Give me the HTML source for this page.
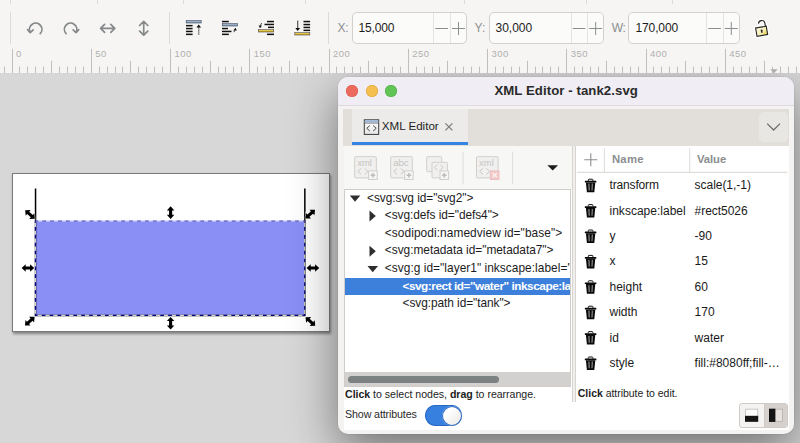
<!DOCTYPE html>
<html><head><meta charset="utf-8"><title>XML Editor - tank2.svg</title>
<style>
html,body{margin:0;padding:0}
body{width:800px;height:443px;overflow:hidden;position:relative;background:#f6f5f4;font-family:"Liberation Sans",sans-serif;font-size:12px;color:#1a1a1a}
.abs,.abs *{position:absolute}
div,span,svg{position:absolute;white-space:nowrap}
.t{line-height:1;transform-origin:0 50%}
#toolbar{left:0;top:0;width:800px;height:48px;background:#f6f5f4}
.vsep{width:1px;background:#dcdad7}
.spin{height:32.4px;top:12px;border:1px solid #d3cfcb;border-radius:5px;background:#fbfbfa;box-sizing:border-box}
.spin i{position:absolute;top:0;bottom:0;width:1px;background:#e6e3e0}
.lab{color:#8c8f90;font-size:12px}
#ruler{left:0;top:48px;width:800px;height:25px;background:#f6f5f4;overflow:hidden}
#canvas{left:0;top:73px;width:800px;height:370px;background:#d7d7d7;overflow:hidden}
#win{left:338px;top:76.5px;width:455.5px;height:357.5px;border-radius:10px;background:#f4f3f2;box-shadow:0 0 0 0.5px rgba(0,0,0,.08),0 17px 48px 0 rgba(0,0,0,.47);overflow:visible}
#winin{left:0;top:0;width:100%;height:100%;border-radius:10px;overflow:hidden}
</style></head><body>

<div id="toolbar">
<div class="vsep" style="left:10px;top:0;height:3.5px"></div>
<div class="vsep" style="left:96.5px;top:0;height:3.5px"></div>
<div class="vsep" style="left:182.5px;top:0;height:3.5px"></div>
<div class="vsep" style="left:305px;top:0;height:3.5px"></div>
<div class="vsep" style="left:463.5px;top:0;height:3.5px"></div>
<div class="vsep" style="left:586px;top:0;height:3.5px"></div>
<div class="vsep" style="left:671.5px;top:0;height:3.5px"></div>
<div class="vsep" style="left:10px;top:12.3px;height:32px"></div>
<div class="vsep" style="left:168.5px;top:12.3px;height:32px"></div>
<div class="vsep" style="left:327.5px;top:12.3px;height:32px"></div>
<svg style="left:0;top:0" width="340" height="48" viewBox="0 0 340 48" fill="none">
<g stroke="#858989" stroke-width="1.7" stroke-linecap="round" stroke-linejoin="round">
<path d="M30.2 32.2 A6.2 6.2 0 1 1 40.2 33.6"/><path d="M27.6 29.6 L30.2 32.6 L33.2 29.8"/>
<g transform="translate(-1.2 0)"><path d="M77.3 32.2 A6.2 6.2 0 1 0 67.3 33.6"/><path d="M79.9 29.6 L77.3 32.6 L74.3 29.8"/></g>
<path d="M100.6 28.3 H114.8 M104.6 24.3 L100.6 28.3 L104.6 32.3 M110.8 24.3 L114.8 28.3 L110.8 32.3"/>
<path d="M143.7 21.4 V35.2 M139.6 25.5 L143.7 21.4 L147.8 25.5 M139.6 31.1 L143.7 35.2 L147.8 31.1"/>
</g>
<defs><linearGradient id="bl" x1="0" y1="0" x2="0" y2="1"><stop offset="0" stop-color="#b4c0d2"/><stop offset="1" stop-color="#7d8fab"/></linearGradient><linearGradient id="yl" x1="0" y1="0" x2="0" y2="1"><stop offset="0" stop-color="#f3dc7a"/><stop offset="1" stop-color="#c9a000"/></linearGradient></defs>
<rect x="186.2" y="20.6" width="15" height="2.4" fill="url(#bl)" stroke="#3b4a63" stroke-width=".6"/>
<rect x="186" y="24.900000000000002" width="6.6" height="1.5" fill="#111"/>
<rect x="186" y="27.8" width="6.6" height="1.5" fill="#111"/>
<rect x="186" y="30.7" width="6.6" height="1.5" fill="#111"/>
<rect x="186" y="33.599999999999994" width="6.6" height="1.5" fill="#111"/>
<rect x="198.1" y="27" width="1.3" height="8" fill="#8a8a8a"/><path d="M196.4 27.6 L198.75 24.6 L201.1 27.6 Z" fill="#111"/>
<rect x="222" y="20.8" width="6.8" height="1.5" fill="#111"/>
<rect x="222.3" y="23.6" width="15.2" height="2.4" fill="url(#bl)" stroke="#3b4a63" stroke-width=".6"/>
<rect x="222" y="27.8" width="6" height="1.5" fill="#111"/><rect x="222" y="30.7" width="9.5" height="1.5" fill="#111"/><rect x="222" y="33.6" width="6.8" height="1.5" fill="#111"/>
<path d="M233.2 30.6 L235.6 27.8 L236.8 30.6 Z" fill="#111"/><path d="M235 30 L233.8 32.2" stroke="#444" stroke-width="1"/>
<rect x="267" y="20.8" width="7" height="1.5" fill="#111"/><rect x="264.5" y="23.7" width="9.5" height="1.5" fill="#111"/><rect x="268" y="26.6" width="6" height="1.5" fill="#111"/>
<rect x="258.5" y="29.6" width="15.2" height="2.4" fill="url(#yl)" stroke="#4a4a5a" stroke-width=".6"/>
<rect x="267" y="33.6" width="7" height="1.5" fill="#111"/>
<path d="M258.6 25.4 L262 25.4 L260 28.2 Z" fill="#111"/><path d="M261.6 23 L260.4 25.6" stroke="#444" stroke-width="1"/>
<rect x="297.1" y="20.6" width="1.2" height="8" fill="#555"/><path d="M295.3 28 L300.1 28 L297.7 31 Z" fill="#111"/>
<rect x="303.5" y="20.8" width="6.6" height="1.5" fill="#111"/>
<rect x="303.5" y="23.8" width="6.6" height="1.5" fill="#111"/>
<rect x="303.5" y="26.7" width="6.6" height="1.5" fill="#111"/>
<rect x="303.5" y="29.6" width="6.6" height="1.5" fill="#111"/>
<rect x="294.8" y="32.6" width="15" height="2.4" fill="url(#yl)" stroke="#4a4a5a" stroke-width=".6"/>
</svg>
<span class="t lab" id="lX" style="letter-spacing:-0.122px;left:337.4px;top:22px">X:</span>
<div class="spin" style="left:351.5px;width:115.5px"><i style="left:80.89999999999998px"></i><i style="left:97.5px"></i></div>
<span class="t" id="vX" style="letter-spacing:-0.117px;left:358.4px;top:21.9px;font-size:12px;color:#1c1c1c">15,000</span>
<svg style="left:0;top:0" width="800" height="48"><g stroke="#8b8e8f" stroke-width="1"><path d="M435.4 28.5 H448.0"/><path d="M452.0 28.5 H465.0 M458.5 22 V35"/></g></svg>
<span class="t lab" id="lY" style="letter-spacing:0.206px;left:474.5px;top:22px">Y:</span>
<div class="spin" style="left:488.6px;width:115.3px"><i style="left:81.19999999999993px"></i><i style="left:97.79999999999995px"></i></div>
<span class="t" id="vY" style="letter-spacing:-0.017px;left:495.5px;top:21.9px;font-size:12px;color:#1c1c1c">30,000</span>
<svg style="left:0;top:0" width="800" height="48"><g stroke="#8b8e8f" stroke-width="1"><path d="M572.8 28.5 H585.3999999999999"/><path d="M589.15 28.5 H602.15 M595.65 22 V35"/></g></svg>
<span class="t lab" id="lW" style="letter-spacing:-0.300px;left:611.7px;top:22px">W:</span>
<div class="spin" style="left:628.2px;width:111.4px"><i style="left:77.0px"></i><i style="left:93.79999999999995px"></i></div>
<span class="t" id="vW" style="letter-spacing:-0.127px;left:635.5px;top:21.9px;font-size:12px;color:#1c1c1c">170,000</span>
<svg style="left:0;top:0" width="800" height="48"><g stroke="#8b8e8f" stroke-width="1"><path d="M708.3000000000001 28.5 H720.9"/><path d="M724.8000000000001 28.5 H737.8000000000001 M731.3000000000001 22 V35"/></g></svg>
<svg style="left:750px;top:14px" width="26" height="28" viewBox="750 14 26 28"><g transform="rotate(-10 762 31)"><path d="M766.2 27 V23.7 A3.25 3.25 0 0 0 759.8 23.1" fill="none" stroke="#fff" stroke-width="3.2"/><rect x="755.6" y="26.4" width="12" height="9.6" fill="#fff" stroke="#fff" stroke-width="2.4"/><path d="M766.2 27 V23.7 A3.25 3.25 0 0 0 759.8 23.1" fill="none" stroke="#222" stroke-width="1.1"/><defs><linearGradient id="lk" x1="0" y1="0" x2="1" y2="1"><stop offset="0" stop-color="#fdfbe6"/><stop offset=".6" stop-color="#f5eeb0"/><stop offset="1" stop-color="#e6c030"/></linearGradient></defs><rect x="756.2" y="27" width="10.8" height="8.4" fill="url(#lk)" stroke="#222" stroke-width="1.1"/><path d="M761.6 29.4 a1 1 0 0 1 1 1 l-.3 2.4 h-1.2 l-.3 -2.4 a1 1 0 0 1 .8 -1z" fill="#222"/></g></svg>
</div>
<div id="ruler"><svg style="left:0;top:0" width="800" height="26" viewBox="0 48 800 26">
<g stroke="#bfbfbd" stroke-width="1">
<path d="M4.5 66.6 V73"/>
<path d="M12.5 48.8 V73"/>
<path d="M19.5 66.6 V73"/>
<path d="M27.5 66.6 V73"/>
<path d="M35.5 66.6 V73"/>
<path d="M43.5 66.6 V73"/>
<path d="M51.5 60.8 V73"/>
<path d="M59.5 66.6 V73"/>
<path d="M67.5 66.6 V73"/>
<path d="M75.5 66.6 V73"/>
<path d="M83.5 66.6 V73"/>
<path d="M91.5 48.8 V73"/>
<path d="M99.5 66.6 V73"/>
<path d="M107.5 66.6 V73"/>
<path d="M115.5 66.6 V73"/>
<path d="M122.5 66.6 V73"/>
<path d="M130.5 60.8 V73"/>
<path d="M138.5 66.6 V73"/>
<path d="M146.5 66.6 V73"/>
<path d="M154.5 66.6 V73"/>
<path d="M162.5 66.6 V73"/>
<path d="M170.5 48.8 V73"/>
<path d="M178.5 66.6 V73"/>
<path d="M186.5 66.6 V73"/>
<path d="M194.5 66.6 V73"/>
<path d="M202.5 66.6 V73"/>
<path d="M210.5 60.8 V73"/>
<path d="M218.5 66.6 V73"/>
<path d="M225.5 66.6 V73"/>
<path d="M233.5 66.6 V73"/>
<path d="M241.5 66.6 V73"/>
<path d="M249.5 48.8 V73"/>
<path d="M257.5 66.6 V73"/>
<path d="M265.5 66.6 V73"/>
<path d="M273.5 66.6 V73"/>
<path d="M281.5 66.6 V73"/>
<path d="M289.5 60.8 V73"/>
<path d="M297.5 66.6 V73"/>
<path d="M305.5 66.6 V73"/>
<path d="M313.5 66.6 V73"/>
<path d="M321.5 66.6 V73"/>
<path d="M329.5 48.8 V73"/>
<path d="M336.5 66.6 V73"/>
<path d="M344.5 66.6 V73"/>
<path d="M352.5 66.6 V73"/>
<path d="M360.5 66.6 V73"/>
<path d="M368.5 60.8 V73"/>
<path d="M376.5 66.6 V73"/>
<path d="M384.5 66.6 V73"/>
<path d="M392.5 66.6 V73"/>
<path d="M400.5 66.6 V73"/>
<path d="M408.5 48.8 V73"/>
<path d="M416.5 66.6 V73"/>
<path d="M424.5 66.6 V73"/>
<path d="M432.5 66.6 V73"/>
<path d="M439.5 66.6 V73"/>
<path d="M447.5 60.8 V73"/>
<path d="M455.5 66.6 V73"/>
<path d="M463.5 66.6 V73"/>
<path d="M471.5 66.6 V73"/>
<path d="M479.5 66.6 V73"/>
<path d="M487.5 48.8 V73"/>
<path d="M495.5 66.6 V73"/>
<path d="M503.5 66.6 V73"/>
<path d="M511.5 66.6 V73"/>
<path d="M519.5 66.6 V73"/>
<path d="M527.5 60.8 V73"/>
<path d="M535.5 66.6 V73"/>
<path d="M542.5 66.6 V73"/>
<path d="M550.5 66.6 V73"/>
<path d="M558.5 66.6 V73"/>
<path d="M566.5 48.8 V73"/>
<path d="M574.5 66.6 V73"/>
<path d="M582.5 66.6 V73"/>
<path d="M590.5 66.6 V73"/>
<path d="M598.5 66.6 V73"/>
<path d="M606.5 60.8 V73"/>
<path d="M614.5 66.6 V73"/>
<path d="M622.5 66.6 V73"/>
<path d="M630.5 66.6 V73"/>
<path d="M638.5 66.6 V73"/>
<path d="M646.5 48.8 V73"/>
<path d="M653.5 66.6 V73"/>
<path d="M661.5 66.6 V73"/>
<path d="M669.5 66.6 V73"/>
<path d="M677.5 66.6 V73"/>
<path d="M685.5 60.8 V73"/>
<path d="M693.5 66.6 V73"/>
<path d="M701.5 66.6 V73"/>
<path d="M709.5 66.6 V73"/>
<path d="M717.5 66.6 V73"/>
<path d="M725.5 48.8 V73"/>
<path d="M733.5 66.6 V73"/>
<path d="M741.5 66.6 V73"/>
<path d="M749.5 66.6 V73"/>
<path d="M756.5 66.6 V73"/>
<path d="M764.5 60.8 V73"/>
<path d="M772.5 66.6 V73"/>
<path d="M780.5 66.6 V73"/>
<path d="M788.5 66.6 V73"/>
<path d="M796.5 66.6 V73"/>
</g>
<text x="16.0" y="56.6" font-size="9.5" letter-spacing=".45" fill="#b0b0ae" font-family="Liberation Sans, sans-serif">0</text>
<text x="95.2" y="56.6" font-size="9.5" letter-spacing=".45" fill="#b0b0ae" font-family="Liberation Sans, sans-serif">50</text>
<text x="174.5" y="56.6" font-size="9.5" letter-spacing=".45" fill="#b0b0ae" font-family="Liberation Sans, sans-serif">100</text>
<text x="253.8" y="56.6" font-size="9.5" letter-spacing=".45" fill="#b0b0ae" font-family="Liberation Sans, sans-serif">150</text>
<text x="333.0" y="56.6" font-size="9.5" letter-spacing=".45" fill="#b0b0ae" font-family="Liberation Sans, sans-serif">200</text>
<text x="412.2" y="56.6" font-size="9.5" letter-spacing=".45" fill="#b0b0ae" font-family="Liberation Sans, sans-serif">250</text>
<text x="491.5" y="56.6" font-size="9.5" letter-spacing=".45" fill="#b0b0ae" font-family="Liberation Sans, sans-serif">300</text>
<text x="570.8" y="56.6" font-size="9.5" letter-spacing=".45" fill="#b0b0ae" font-family="Liberation Sans, sans-serif">350</text>
<text x="650.0" y="56.6" font-size="9.5" letter-spacing=".45" fill="#b0b0ae" font-family="Liberation Sans, sans-serif">400</text>
<text x="729.2" y="56.6" font-size="9.5" letter-spacing=".45" fill="#b0b0ae" font-family="Liberation Sans, sans-serif">450</text>
<path d="M770.3 69.2 L777.7 69.2 L774 73.3 Z" fill="#adadab"/>
</svg></div>
<div id="canvas">
<div style="left:12px;top:100px;width:318px;height:159px;background:#fff;border:1px solid #7a7a7a;box-sizing:border-box;box-shadow:0.5px 1.5px 2.5px rgba(0,0,0,.4)"></div>
<svg style="left:0;top:0" width="800" height="370" viewBox="0 73 800 370">
<rect x="35.10" y="220.60" width="269.50" height="94.90" fill="#8a8ff6"/>
<path d="M35.55 188.5 V315.50 H304.85 V188.5" fill="none" stroke="#000" stroke-width="1.5"/>
<path d="M35.40 315.40 V221.05 M35.40 315.40 H304.70 V221.05" fill="none" stroke="#d4d4cc" stroke-width="1.2"/>
<path d="M35.40 221.05 V315.40 H304.70 V221.05" fill="none" stroke="#00007a" stroke-width="1.2" stroke-dasharray="3.7 4.2" stroke-dashoffset="2"/>
<path d="M35.40 221.05 H304.70" fill="none" stroke="#f4f4ff" stroke-width=".9" stroke-opacity=".8"/>
<path d="M35.40 221.05 H304.70" fill="none" stroke="#101090" stroke-width=".9" stroke-opacity=".8" stroke-dasharray="3.7 4.2" stroke-dashoffset="1"/>
<path d="M-6.3 0 L-2.2 -3.75 L-2.2 -1.55 L2.2 -1.55 L2.2 -3.75 L6.3 0 L2.2 3.75 L2.2 1.55 L-2.2 1.55 L-2.2 3.75 Z" transform="translate(170.60 212.60) rotate(90)" fill="#000" stroke="#fff" stroke-width="1.4" stroke-opacity=".55" paint-order="stroke"/>
<path d="M-6.3 0 L-2.2 -3.75 L-2.2 -1.55 L2.2 -1.55 L2.2 -3.75 L6.3 0 L2.2 3.75 L2.2 1.55 L-2.2 1.55 L-2.2 3.75 Z" transform="translate(170.60 323.20) rotate(90)" fill="#000" stroke="#fff" stroke-width="1.4" stroke-opacity=".55" paint-order="stroke"/>
<path d="M-6.3 0 L-2.2 -3.75 L-2.2 -1.55 L2.2 -1.55 L2.2 -3.75 L6.3 0 L2.2 3.75 L2.2 1.55 L-2.2 1.55 L-2.2 3.75 Z" transform="translate(27.90 268.05) rotate(0)" fill="#000" stroke="#fff" stroke-width="1.4" stroke-opacity=".55" paint-order="stroke"/>
<path d="M-6.3 0 L-2.2 -3.75 L-2.2 -1.55 L2.2 -1.55 L2.2 -3.75 L6.3 0 L2.2 3.75 L2.2 1.55 L-2.2 1.55 L-2.2 3.75 Z" transform="translate(312.90 268.05) rotate(0)" fill="#000" stroke="#fff" stroke-width="1.4" stroke-opacity=".55" paint-order="stroke"/>
<path d="M-6.5 0 L-2.4000000000000004 -3.75 L-2.4000000000000004 -1.55 L2.4000000000000004 -1.55 L2.4000000000000004 -3.75 L6.5 0 L2.4000000000000004 3.75 L2.4000000000000004 1.55 L-2.4000000000000004 1.55 L-2.4000000000000004 3.75 Z" transform="translate(30.00 214.50) rotate(42)" fill="#000" stroke="#fff" stroke-width="1.4" stroke-opacity=".55" paint-order="stroke"/>
<path d="M-6.5 0 L-2.4000000000000004 -3.75 L-2.4000000000000004 -1.55 L2.4000000000000004 -1.55 L2.4000000000000004 -3.75 L6.5 0 L2.4000000000000004 3.75 L2.4000000000000004 1.55 L-2.4000000000000004 1.55 L-2.4000000000000004 3.75 Z" transform="translate(310.20 214.10) rotate(-42)" fill="#000" stroke="#fff" stroke-width="1.4" stroke-opacity=".55" paint-order="stroke"/>
<path d="M-6.5 0 L-2.4000000000000004 -3.75 L-2.4000000000000004 -1.55 L2.4000000000000004 -1.55 L2.4000000000000004 -3.75 L6.5 0 L2.4000000000000004 3.75 L2.4000000000000004 1.55 L-2.4000000000000004 1.55 L-2.4000000000000004 3.75 Z" transform="translate(29.80 321.20) rotate(-42)" fill="#000" stroke="#fff" stroke-width="1.4" stroke-opacity=".55" paint-order="stroke"/>
<path d="M-6.5 0 L-2.4000000000000004 -3.75 L-2.4000000000000004 -1.55 L2.4000000000000004 -1.55 L2.4000000000000004 -3.75 L6.5 0 L2.4000000000000004 3.75 L2.4000000000000004 1.55 L-2.4000000000000004 1.55 L-2.4000000000000004 3.75 Z" transform="translate(310.40 321.50) rotate(42)" fill="#000" stroke="#fff" stroke-width="1.4" stroke-opacity=".55" paint-order="stroke"/>
</svg>
<div id="win" style="top:3.8px"><div id="winin">
<div style="left:0;top:0;width:100%;height:28.4px;background:#f0edf5;border-bottom:1px solid #dedbe0"></div>
<div style="left:8.199999999999989px;top:8.200000000000003px;width:12px;height:12px;border-radius:50%;background:#ed6a5e;box-shadow:inset 0 0 0 .5px #d5554a"></div>
<div style="left:27.69999999999999px;top:8.200000000000003px;width:12px;height:12px;border-radius:50%;background:#f5bf4f;box-shadow:inset 0 0 0 .5px #d9a23c"></div>
<div style="left:47.19999999999999px;top:8.200000000000003px;width:12px;height:12px;border-radius:50%;background:#61c454;box-shadow:inset 0 0 0 .5px #4fa83f"></div>
<span class="t" id="title" style="letter-spacing:0.076px;left:156.39999999999998px;top:6.799999999999997px;font-size:13.2px;font-weight:bold;color:#2a2a2a">XML Editor - tank2.svg</span>
<div style="left:5.5px;top:69.2px;width:445.70000000000005px;height:284.2px;background:#fff"></div>
<div style="left:5.5px;top:69.2px;width:228.0px;height:42.599999999999994px;background:#f7f7f6"></div>
<div style="left:5px;top:32.5px;width:446.4px;height:36.500000000000014px;background:#e2dfdb"></div>
<div style="left:14px;top:32.5px;width:116.19999999999999px;height:36.10000000000001px;background:#ecebe9;border-bottom:3.4px solid #3584e4;box-sizing:border-box"></div>
<svg style="left:24px;top:40.2px" width="20" height="20" viewBox="362 117 20 20"><defs><linearGradient id="tg" x1="0" y1="0" x2="0" y2="1"><stop offset="0" stop-color="#ffffff"/><stop offset="1" stop-color="#e6e6e6"/></linearGradient></defs><rect x="364.3" y="119.8" width="14.4" height="14.6" fill="url(#tg)" stroke="#3a3a3a" stroke-width="1"/><rect x="364.8" y="120.3" width="13.4" height="2.4" fill="#9db7dc"/><path d="M364.3 123.2 H378.7" stroke="#666" stroke-width=".7"/><path d="M369.8 125.6 L366.8 128.3 L369.8 131 M373.2 125.6 L376.2 128.3 L373.2 131" fill="none" stroke="#444" stroke-width="1"/></svg>
<span class="t" id="tabt" style="letter-spacing:-0.002px;left:43.80000000000001px;top:43.5px;font-size:11.6px;color:#1e1e1e">XML Editor</span>
<svg style="left:105px;top:44.2px" width="12" height="12" viewBox="443 121 12 12"><path d="M445.4 123.4 L452.4 130.4 M452.4 123.4 L445.4 130.4" stroke="#7c7f80" stroke-width="1.3"/></svg>
<div style="left:421px;top:35.60000000000001px;width:29.3px;height:29.3px;border-radius:5px;background:#e9e7e4"></div>
<svg style="left:426px;top:43.2px" width="20" height="14" viewBox="764 120 20 14"><path d="M767.2 123.6 L773.6 130 L780 123.6" fill="none" stroke="#6d7071" stroke-width="1.3"/></svg>
<svg style="left:7px;top:71.2px" width="225" height="40" viewBox="345 148 225 40" font-family="Liberation Sans, sans-serif">
<rect x="354.7" y="156.7" width="21.6" height="21.2" rx="1" fill="#f1f0ef" stroke="#cfcfcd" stroke-width="1"/>
<text x="357.2" y="165.8" font-size="9.5" fill="#c4c4c2">xml</text>
<path d="M361.2 168.4 L357.8 171.4 L361.2 174.4 M364.59999999999997 168.4 L368.0 171.4 L364.59999999999997 174.4" fill="none" stroke="#c8c8c6" stroke-width="1"/>
<rect x="368.59999999999997" y="170.9" width="8.6" height="8.6" fill="#f6f5f4" stroke="#cfcfcd" stroke-width="1"/>
<path d="M370.59999999999997 175.2 H375.2 M372.9 172.9 V177.5" stroke="#bdbdbb" stroke-width="1.6"/>
<rect x="390.7" y="156.7" width="21.6" height="21.2" rx="1" fill="#f1f0ef" stroke="#cfcfcd" stroke-width="1"/>
<text x="393.2" y="165.8" font-size="9.5" fill="#c4c4c2">abc</text>
<path d="M397.2 168.4 L393.8 171.4 L397.2 174.4 M400.59999999999997 168.4 L404.0 171.4 L400.59999999999997 174.4" fill="none" stroke="#c8c8c6" stroke-width="1"/>
<rect x="404.59999999999997" y="170.9" width="8.6" height="8.6" fill="#f6f5f4" stroke="#cfcfcd" stroke-width="1"/>
<path d="M406.59999999999997 175.2 H411.2 M408.9 172.9 V177.5" stroke="#bdbdbb" stroke-width="1.6"/>
<rect x="426.7" y="156.7" width="15" height="15" rx="1" fill="#f1f0ef" stroke="#cfcfcd"/>
<rect x="432" y="162.3" width="15.4" height="15.6" rx="1" fill="#f1f0ef" stroke="#cfcfcd"/>
<path d="M437.2 164.6 L434.6 167.4 L437.2 170.2 M440.4 164.6 L443 167.4 L440.4 170.2" fill="none" stroke="#c8c8c6" stroke-width="1"/>
<rect x="440" y="170.9" width="8.6" height="8.6" fill="#f6f5f4" stroke="#cfcfcd"/><path d="M442 175.2 H446.6 M444.3 172.9 V177.5" stroke="#bdbdbb" stroke-width="1.6"/>
<rect x="476.5" y="156.7" width="21.6" height="21.2" rx="1" fill="#f1f0ef" stroke="#cfcfcd" stroke-width="1"/>
<text x="479" y="165.8" font-size="9.5" fill="#c4c4c2">xml</text>
<path d="M483 168.4 L479.6 171.4 L483 174.4 M486.4 168.4 L489.8 171.4 L486.4 174.4" fill="none" stroke="#c8c8c6" stroke-width="1"/>
<rect x="490.4" y="170.9" width="8.6" height="8.6" fill="#f1c9c9" stroke="#ecc0c0" stroke-width="1"/>
<path d="M492.6 173.1 L496.8 177.3 M496.8 173.1 L492.6 177.3" stroke="#fbeeee" stroke-width="1.6"/>
<path d="M463 151.6 V184.4 M512.6 151.6 V184.4" stroke="#dedcd9" stroke-width="1"/>
<path d="M547.4 165.2 H558 L552.7 170.6 Z" fill="#1c1c1c"/>
</svg>
<div style="left:6px;top:111.8px;width:227.20000000000005px;height:198.00000000000003px;background:#fff;border:1px solid #d0ccc8;box-sizing:border-box"></div>
<div id="tree" style="left:7px;top:112.8px;width:225.20000000000005px;height:182.4px;overflow:hidden">
<svg style="left:0;top:0" width="226" height="183" viewBox="345 189.6 226 183">
<path d="M349.79999999999995 195.1 H360.29999999999995 L355.04999999999995 201.3 Z" fill="#2e2e2e"/>
<path d="M369.5 210.12 V221.12 L375.79999999999995 215.62 Z" fill="#2e2e2e"/>
<path d="M369.5 245.36 V256.36 L375.79999999999995 250.86 Z" fill="#2e2e2e"/>
<path d="M367.49999999999994 265.58000000000004 H377.99999999999994 L372.74999999999994 271.78000000000003 Z" fill="#2e2e2e"/>
</svg>
<span class="t tr" id="tr0" style="letter-spacing:-0.056px;left:22.100000000000023px;top:3.0px;font-size:11.9px;color:#1c1c1c">&lt;svg:svg id="svg2"&gt;</span>
<span class="t tr" id="tr1" style="letter-spacing:-0.062px;left:39.80000000000001px;top:20.620000000000005px;font-size:11.9px;color:#1c1c1c">&lt;svg:defs id="defs4"&gt;</span>
<span class="t tr" id="tr2" style="letter-spacing:0.071px;left:39.80000000000001px;top:38.24000000000001px;font-size:11.9px;color:#1c1c1c">&lt;sodipodi:namedview id="base"&gt;</span>
<span class="t tr" id="tr3" style="letter-spacing:-0.025px;left:39.80000000000001px;top:55.860000000000014px;font-size:11.9px;color:#1c1c1c">&lt;svg:metadata id="metadata7"&gt;</span>
<span class="t tr" id="tr4" style="letter-spacing:0.039px;left:39.80000000000001px;top:73.48000000000005px;font-size:11.9px;color:#1c1c1c">&lt;svg:g id="layer1" inkscape:label="</span>
<div style="left:0;top:88.29999999999998px;width:300px;height:17.3px;background:#3d80db"></div>
<span class="t tr" id="tr5" style="letter-spacing:-0.465px;left:57.5px;top:91.10000000000005px;font-size:11.8px;font-weight:bold;color:#fff"><span id="tr5a" style="position:static">&lt;svg:rect id="water" inkscape:la</span>bel="#rect5026"&gt;</span>
<span class="t tr" id="tr6" style="letter-spacing:-0.063px;left:57.5px;top:108.72000000000006px;font-size:11.9px;color:#1c1c1c">&lt;svg:path id="tank"&gt;</span>
</div>
<div style="left:7px;top:295.2px;width:225.20000000000005px;height:13.600000000000023px;background:#d2d1cf"></div>
<div style="left:10.199999999999989px;top:299.0px;width:151.2px;height:7.1px;border-radius:3.6px;background:#7c8181"></div>
<span class="t" id="st1" style="letter-spacing:-0.024px;left:7px;top:312.3px;font-size:10.6px;color:#1c1c1c"><b>Click</b> to select nodes, <b>drag</b> to rearrange.</span>
<span class="t" id="st2" style="letter-spacing:-0.128px;left:7px;top:332.3px;font-size:10.7px;color:#2a2a2a">Show attributes</span>
<div style="left:86.69999999999999px;top:328.4px;width:37.1px;height:20.8px;border-radius:10.4px;background:#3780e0;box-shadow:inset 0 0 0 1px #2a69c2"></div>
<div style="left:103.60000000000002px;top:328.8px;width:20px;height:20px;border-radius:50%;background:linear-gradient(135deg,#fff 30%,#e8e6e4);box-shadow:inset 0 0 0 1px #2a69c2"></div>
<div style="left:233.60000000000002px;top:69.2px;width:4.6px;height:256.5px;background:#f1efee;border-left:1px solid #d8d5d1;border-right:1px solid #d8d5d1;box-sizing:border-box"></div>
<div style="left:238.39999999999998px;top:69.2px;width:213.0px;height:239px;background:#fff"></div>
<svg style="left:238px;top:69.2px" width="214" height="240" viewBox="576 146 214 240">
<path d="M584.3 159.7 H597.3 M590.8 153.2 V166.2" stroke="#8b8e8f" stroke-width="1.1"/>
<path d="M604.4 148.4 V172 M689.7 148.4 V172" stroke="#dedbd8" stroke-width="1"/>
<path d="M577 172.3 H787.4" stroke="#d8d4d0" stroke-width="1"/>
<g transform="translate(0 0.0)"><path d="M588.3 180.9 V179.9 Q588.3 179.2 589 179.2 H592.2 Q592.9 179.2 592.9 179.9 V180.9" fill="none" stroke="#111" stroke-width="1"/><rect x="584.8" y="180.8" width="11.6" height="1.7" rx=".4" fill="#0a0a0a"/><path d="M585.9 182.4 H595.3 L594.3 192.2 H586.9 Z" fill="#0a0a0a"/><path d="M588.9 183.6 L589.2 190.4 M592.3 183.6 L592 190.4" stroke="#9a9a9a" stroke-width="1.1"/></g>
<g transform="translate(0 25.4)"><path d="M588.3 180.9 V179.9 Q588.3 179.2 589 179.2 H592.2 Q592.9 179.2 592.9 179.9 V180.9" fill="none" stroke="#111" stroke-width="1"/><rect x="584.8" y="180.8" width="11.6" height="1.7" rx=".4" fill="#0a0a0a"/><path d="M585.9 182.4 H595.3 L594.3 192.2 H586.9 Z" fill="#0a0a0a"/><path d="M588.9 183.6 L589.2 190.4 M592.3 183.6 L592 190.4" stroke="#9a9a9a" stroke-width="1.1"/></g>
<g transform="translate(0 50.8)"><path d="M588.3 180.9 V179.9 Q588.3 179.2 589 179.2 H592.2 Q592.9 179.2 592.9 179.9 V180.9" fill="none" stroke="#111" stroke-width="1"/><rect x="584.8" y="180.8" width="11.6" height="1.7" rx=".4" fill="#0a0a0a"/><path d="M585.9 182.4 H595.3 L594.3 192.2 H586.9 Z" fill="#0a0a0a"/><path d="M588.9 183.6 L589.2 190.4 M592.3 183.6 L592 190.4" stroke="#9a9a9a" stroke-width="1.1"/></g>
<g transform="translate(0 76.2)"><path d="M588.3 180.9 V179.9 Q588.3 179.2 589 179.2 H592.2 Q592.9 179.2 592.9 179.9 V180.9" fill="none" stroke="#111" stroke-width="1"/><rect x="584.8" y="180.8" width="11.6" height="1.7" rx=".4" fill="#0a0a0a"/><path d="M585.9 182.4 H595.3 L594.3 192.2 H586.9 Z" fill="#0a0a0a"/><path d="M588.9 183.6 L589.2 190.4 M592.3 183.6 L592 190.4" stroke="#9a9a9a" stroke-width="1.1"/></g>
<g transform="translate(0 101.6)"><path d="M588.3 180.9 V179.9 Q588.3 179.2 589 179.2 H592.2 Q592.9 179.2 592.9 179.9 V180.9" fill="none" stroke="#111" stroke-width="1"/><rect x="584.8" y="180.8" width="11.6" height="1.7" rx=".4" fill="#0a0a0a"/><path d="M585.9 182.4 H595.3 L594.3 192.2 H586.9 Z" fill="#0a0a0a"/><path d="M588.9 183.6 L589.2 190.4 M592.3 183.6 L592 190.4" stroke="#9a9a9a" stroke-width="1.1"/></g>
<g transform="translate(0 127.0)"><path d="M588.3 180.9 V179.9 Q588.3 179.2 589 179.2 H592.2 Q592.9 179.2 592.9 179.9 V180.9" fill="none" stroke="#111" stroke-width="1"/><rect x="584.8" y="180.8" width="11.6" height="1.7" rx=".4" fill="#0a0a0a"/><path d="M585.9 182.4 H595.3 L594.3 192.2 H586.9 Z" fill="#0a0a0a"/><path d="M588.9 183.6 L589.2 190.4 M592.3 183.6 L592 190.4" stroke="#9a9a9a" stroke-width="1.1"/></g>
<g transform="translate(0 152.4)"><path d="M588.3 180.9 V179.9 Q588.3 179.2 589 179.2 H592.2 Q592.9 179.2 592.9 179.9 V180.9" fill="none" stroke="#111" stroke-width="1"/><rect x="584.8" y="180.8" width="11.6" height="1.7" rx=".4" fill="#0a0a0a"/><path d="M585.9 182.4 H595.3 L594.3 192.2 H586.9 Z" fill="#0a0a0a"/><path d="M588.9 183.6 L589.2 190.4 M592.3 183.6 L592 190.4" stroke="#9a9a9a" stroke-width="1.1"/></g>
<g transform="translate(0 177.8)"><path d="M588.3 180.9 V179.9 Q588.3 179.2 589 179.2 H592.2 Q592.9 179.2 592.9 179.9 V180.9" fill="none" stroke="#111" stroke-width="1"/><rect x="584.8" y="180.8" width="11.6" height="1.7" rx=".4" fill="#0a0a0a"/><path d="M585.9 182.4 H595.3 L594.3 192.2 H586.9 Z" fill="#0a0a0a"/><path d="M588.9 183.6 L589.2 190.4 M592.3 183.6 L592 190.4" stroke="#9a9a9a" stroke-width="1.1"/></g>
</svg>
<span class="t" id="hn" style="letter-spacing:0.280px;left:273.9px;top:77.2px;font-size:11.3px;font-weight:bold;color:#8b8e8f">Name</span>
<span class="t" id="hv" style="letter-spacing:-0.046px;left:358.9px;top:77.2px;font-size:11.3px;font-weight:bold;color:#8b8e8f">Value</span>
<span class="t an" id="an0" style="letter-spacing:-0.160px;left:271.5px;top:102.40000000000002px;font-size:12px">transform</span>
<span class="t av" id="av0" style="letter-spacing:-0.040px;left:356.6px;top:102.40000000000002px;font-size:12px">scale(1,-1)</span>
<span class="t an" id="an1" style="letter-spacing:0.013px;left:271.5px;top:127.80000000000003px;font-size:12px">inkscape:label</span>
<span class="t av" id="av1" style="letter-spacing:-0.042px;left:356.6px;top:127.80000000000003px;font-size:12px">#rect5026</span>
<span class="t an" id="an2" style="left:271.5px;top:153.2px;font-size:12px">y</span>
<span class="t av" id="av2" style="left:356.6px;top:153.2px;font-size:12px">-90</span>
<span class="t an" id="an3" style="left:271.5px;top:178.60000000000002px;font-size:12px">x</span>
<span class="t av" id="av3" style="left:356.6px;top:178.60000000000002px;font-size:12px">15</span>
<span class="t an" id="an4" style="left:271.5px;top:204.0px;font-size:12px">height</span>
<span class="t av" id="av4" style="left:356.6px;top:204.0px;font-size:12px">60</span>
<span class="t an" id="an5" style="left:271.5px;top:229.39999999999998px;font-size:12px">width</span>
<span class="t av" id="av5" style="left:356.6px;top:229.39999999999998px;font-size:12px">170</span>
<span class="t an" id="an6" style="left:271.5px;top:254.79999999999995px;font-size:12px">id</span>
<span class="t av" id="av6" style="left:356.6px;top:254.79999999999995px;font-size:12px">water</span>
<span class="t an" id="an7" style="left:271.5px;top:280.2px;font-size:12px">style</span>
<span class="t av" id="av7" style="left:356.6px;top:280.2px;font-size:12px">fill:#8080ff;fill-…</span>
<span class="t" id="st3" style="letter-spacing:-0.029px;left:239.79999999999995px;top:311.4px;font-size:10.5px;color:#1c1c1c"><b>Click</b> attribute to edit.</span>
<div style="left:400.70000000000005px;top:326.4px;width:49.1px;height:24.4px;border-radius:3px;border:1px solid #cfcac6;box-sizing:border-box;background:#f4f3f1;overflow:hidden"><div style="left:24.2px;top:0;width:24px;height:24px;background:#d6d1cd;border-left:1px solid #cfcac6"></div></div>
<svg style="left:400.70000000000005px;top:326.4px" width="50" height="25" viewBox="738.7 403.2 50 25"><rect x="745.2" y="409.4" width="12.2" height="12.2" fill="#fdfdfd" stroke="#c9c6c3" stroke-width="1"/><rect x="744.7" y="416" width="13.2" height="6" fill="#151515"/><rect x="769.2" y="409.4" width="13" height="12.2" fill="#e6e2de" stroke="#bdb8b4" stroke-width="1"/><rect x="768.7" y="408.9" width="6.4" height="13.2" fill="#151515"/></svg>
</div></div>
</div>
</body></html>
